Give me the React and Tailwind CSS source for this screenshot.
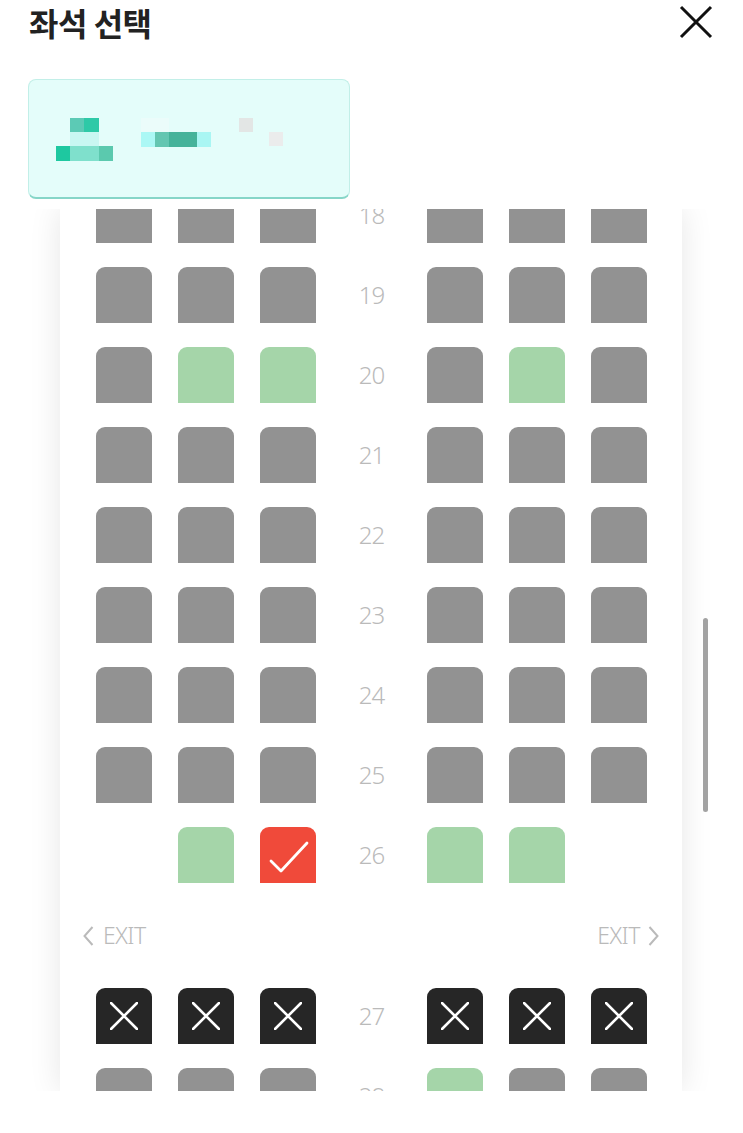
import React from 'react'

const ROWS = [
  { no: 18, left: ['g', 'g', 'g'], right: ['g', 'g', 'g'] },
  { no: 19, left: ['g', 'g', 'g'], right: ['g', 'g', 'g'] },
  { no: 20, left: ['g', 'a', 'a'], right: ['g', 'a', 'g'] },
  { no: 21, left: ['g', 'g', 'g'], right: ['g', 'g', 'g'] },
  { no: 22, left: ['g', 'g', 'g'], right: ['g', 'g', 'g'] },
  { no: 23, left: ['g', 'g', 'g'], right: ['g', 'g', 'g'] },
  { no: 24, left: ['g', 'g', 'g'], right: ['g', 'g', 'g'] },
  { no: 25, left: ['g', 'g', 'g'], right: ['g', 'g', 'g'] },
  { no: 26, left: [null, 'a', 's'], right: ['a', 'a', null] },
  'exit',
  { no: 27, left: ['x', 'x', 'x'], right: ['x', 'x', 'x'] },
  { no: 28, left: ['g', 'g', 'g'], right: ['a', 'g', 'g'] },
]

function Seat({ type }) {
  if (!type) return <div className="w-[56px] h-[56px]" />
  if (type === 'x') {
    return (
      <div className="w-[56px] h-[56px] rounded-t-[9px] bg-[#262626] flex items-center justify-center">
        <svg width="28" height="28" viewBox="0 0 28 28">
          <path d="M1 1 L27 27 M27 1 L1 27" stroke="#fff" strokeWidth="2.6" strokeLinecap="round" />
        </svg>
      </div>
    )
  }
  if (type === 's') {
    return (
      <div className="w-[56px] h-[56px] rounded-t-[9px] bg-[#f04a3a]">
        <svg width="56" height="56" viewBox="0 0 56 56">
          <path d="M11 34 L21 44 L47 16" fill="none" stroke="#fff" strokeWidth="2.8" strokeLinecap="round" strokeLinejoin="round" />
        </svg>
      </div>
    )
  }
  const bg = type === 'a' ? 'bg-[#a5d5a9]' : 'bg-[#929292]'
  return <div className={`w-[56px] h-[56px] rounded-t-[9px] ${bg}`} />
}

function SeatGroup({ seats }) {
  return (
    <div className="flex gap-[26px]">
      {seats.map((s, i) => (
        <Seat key={i} type={s} />
      ))}
    </div>
  )
}

function ExitRow() {
  return (
    <div className="h-[57px] -ml-[13px] -mr-[12px] flex items-center justify-between text-[23px] font-light text-[#bababa]">
      <div className="flex items-center gap-[9px]">
        <svg width="11" height="20" viewBox="0 0 11 20">
          <path d="M9.5 1 L1.5 10 L9.5 19" fill="none" stroke="#bababa" strokeWidth="2" />
        </svg>
        <span className="tracking-[-0.5px]">EXIT</span>
      </div>
      <div className="flex items-center gap-[8px]">
        <span className="tracking-[-0.5px]">EXIT</span>
        <svg width="11" height="20" viewBox="0 0 11 20">
          <path d="M1.5 1 L9.5 10 L1.5 19" fill="none" stroke="#bababa" strokeWidth="2" />
        </svg>
      </div>
    </div>
  )
}

function Mosaic() {
  const cells = [
    [41, 38, 14, 14, '#5ccab5'],
    [55, 38, 15, 14, '#2ec9a7'],
    [41, 52, 29, 14, '#c9f7f2'],
    [27, 66, 14, 15, '#1ec8a0'],
    [41, 66, 29, 15, '#7fe0cc'],
    [70, 66, 14, 15, '#5bc9ae'],
    [112, 38, 28, 14, '#ebfcfa'],
    [112, 52, 14, 15, '#abf8f5'],
    [126, 52, 14, 15, '#63c6b1'],
    [140, 52, 28, 15, '#45b39a'],
    [168, 52, 14, 15, '#a9f6f3'],
    [210, 38, 14, 14, '#e3e6e5'],
    [240, 52, 14, 14, '#ebecec'],
  ]
  return (
    <svg width="322" height="120" viewBox="0 0 322 120" className="block">
      {cells.map(([x, y, w, h, c], i) => (
        <rect key={i} x={x} y={y} width={w} height={h} fill={c} />
      ))}
    </svg>
  )
}

export default function App() {
  return (
    <div className="relative w-[743px] h-[1133px] bg-white overflow-hidden font-['Noto_Sans','Noto_Sans_CJK_KR',sans-serif]">
      <div className="h-[43px] flex items-center justify-between pl-[29px] pr-[30px]">
        <h1 className="text-[32px] font-bold leading-none text-[#222] tracking-[-0.5px] font-['Noto_Sans_CJK_KR',sans-serif]">
          좌석 선택
        </h1>
        <svg width="34" height="34" viewBox="0 0 34 34">
          <path d="M2 2 L32 32 M32 2 L2 32" stroke="#111" strokeWidth="3" />
        </svg>
      </div>

      <div className="mt-[36px] ml-[28px] w-[322px] h-[120px] rounded-[8px] bg-[#e4fdfa] border border-[#c2efe8] border-b-[#86d6c8] border-b-2 overflow-hidden">
        <Mosaic />
      </div>

      <div className="relative mt-[10px] h-[882px] overflow-hidden">
        <div className="ml-[60px] w-[622px] h-full bg-white shadow-[0_0_30px_rgba(0,0,0,0.1)] flex flex-col overflow-hidden">
          <div className="-mt-[22px] pl-[36px] pr-[35px] flex flex-col gap-[24px]">
            {ROWS.map((row, i) =>
              row === 'exit' ? (
                <ExitRow key={i} />
              ) : (
                <div key={i} className="flex items-center">
                  <SeatGroup seats={row.left} />
                  <div className="w-[111px] text-center text-[24px] font-light text-[#bababa] tracking-[-1px]">
                    {row.no}
                  </div>
                  <SeatGroup seats={row.right} />
                </div>
              )
            )}
          </div>
        </div>
        <div className="absolute left-[703px] top-[409px] w-[5px] h-[194px] rounded-full bg-[#a2a2a2]" />
      </div>
    </div>
  )
}
